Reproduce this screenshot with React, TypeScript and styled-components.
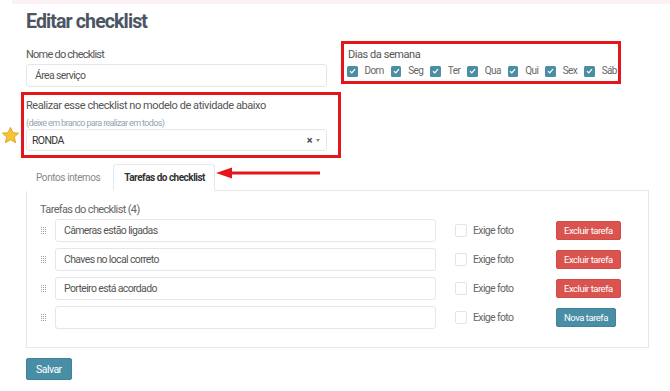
import * as React from 'react';
import styled, { createGlobalStyle } from 'styled-components';

const GlobalStyle = createGlobalStyle`
  html, body {
    margin: 0;
    padding: 0;
    background: #fff;
  }
  body {
    font-family: Roboto, "Liberation Sans", Arial, sans-serif;
    color: #555;
    letter-spacing: -0.04em;
  }
  * {
    box-sizing: border-box;
  }
`;

const teal = '#4a8ea5';
const danger = '#d9534f';
const annotation = '#e3161c';

const TopBand = styled.div`
  height: 4px;
  margin-left: 12px;
  background: #fcf1f4;
`;

const Page = styled.div`
  padding: 0 21px 0 26px;
`;

const Title = styled.h1`
  margin: 5px 0 0;
  font-size: 19.5px;
  line-height: 26px;
  font-weight: 700;
  color: #4b5563;
  letter-spacing: -0.045em;
`;

const TopSection = styled.div`
  display: flex;
  align-items: flex-start;
  margin-top: 10px;
`;

const LeftColumn = styled.div`
  width: 301px;
  display: flex;
  flex-direction: column;
`;

const Label = styled.div<{ $offset?: number; $tight?: boolean }>`
  font-size: 11px;
  line-height: 14px;
  color: #555;
  margin-top: ${p => p.$offset || 0}px;
  letter-spacing: ${p => (p.$tight ? '-0.07em' : '-0.04em')};
`;

const Hint = styled.div`
  font-size: 9px;
  line-height: 12px;
  color: #93a4b4;
  margin-top: 4px;
`;

const TextInput = styled.div<{ $offset?: number }>`
  height: 23px;
  margin-top: ${p => p.$offset || 0}px;
  border: 1px solid #e3e6ea;
  border-radius: 3px;
  display: flex;
  align-items: center;
  padding: 0 8px;
  font-size: 10.5px;
  color: #555;
  background: #fff;
`;

const AnnotatedBox = styled.div`
  position: relative;
  border: 3px solid ${annotation};
  margin: 5px -14px 0 -5px;
  padding: 4px 11px 4px 2px;
`;

const Star = styled.svg`
  position: absolute;
  left: -23px;
  top: 31px;
`;

const SelectBox = styled(TextInput)`
  height: 22px;
  justify-content: space-between;
  padding: 0 6px 0 5px;
  color: #333;
`;

const SelectIcons = styled.div`
  display: flex;
  align-items: center;
  gap: 4px;
  color: #444;
  font-size: 11px;
  font-weight: 700;
`;

const Caret = styled.span`
  width: 0;
  height: 0;
  border-left: 2.5px solid transparent;
  border-right: 2.5px solid transparent;
  border-top: 3px solid #888;
`;

const DaysBox = styled.div`
  margin-left: 14px;
  margin-top: -4px;
  width: 280px;
  border: 3px solid ${annotation};
  padding: 4px 3px 4px 4px;
`;

const DaysRow = styled.div`
  display: flex;
  align-items: center;
  gap: 7px;
  margin-top: 3px;
  margin-left: -1px;
`;

const Day = styled.label`
  display: flex;
  align-items: center;
  gap: 7px;
  font-size: 10px;
  line-height: 12px;
  letter-spacing: -0.06em;
  color: #666;
`;

const CheckedBox = styled.span`
  width: 10.5px;
  height: 11px;
  border-radius: 1.5px;
  background: ${teal};
  display: inline-flex;
  align-items: center;
  justify-content: center;
`;

const TabsRow = styled.div`
  display: flex;
  align-items: flex-end;
  margin-top: 6px;
`;

const Tab = styled.div<{ $active?: boolean }>`
  height: 27px;
  display: flex;
  align-items: center;
  padding: ${p => (p.$active ? '0 9px 0 10px' : '0 12px 0 9px')};
  font-size: 10px;
  margin-bottom: -1px;
  position: relative;
  z-index: 1;
  background: #fff;
  font-weight: ${p => (p.$active ? 700 : 400)};
  letter-spacing: ${p => (p.$active ? '-0.05em' : '-0.04em')};
  color: ${p => (p.$active ? '#333' : '#888')};
  border: 1px solid ${p => (p.$active ? '#e5e7ea' : 'transparent')};
  border-bottom-color: ${p => (p.$active ? '#fff' : 'transparent')};
  border-radius: 3px 3px 0 0;
`;

const Arrow = styled.svg`
  margin: 0 0 11px 1px;
`;

const Panel = styled.div`
  width: 623px;
  border: 1px solid #e5e7ea;
  padding: 12px 13px 18px 13px;
`;

const PanelTitle = styled.div`
  font-size: 11px;
  line-height: 14px;
  color: #666;
  margin-bottom: 2px;
`;

const TaskRow = styled.div`
  display: grid;
  grid-template-columns: 15px 381px 120px auto;
  align-items: center;
  height: 23px;
  margin-bottom: 6px;

  &:last-child {
    margin-bottom: 0;
  }
`;

const Handle = styled.svg`
  margin-left: 1px;
`;

const PhotoOption = styled.label`
  display: flex;
  align-items: center;
  gap: 6px;
  padding-left: 19px;
  font-size: 10.5px;
  color: #666;
`;

const EmptyBox = styled.span`
  width: 12px;
  height: 13px;
  border: 1px solid #e1e4e8;
  border-radius: 2px;
  background: #fff;
`;

const Button = styled.button<{ $variant: 'danger' | 'primary' }>`
  font-family: Roboto, "Liberation Sans", Arial, sans-serif;
  letter-spacing: -0.05em;
  border: 1px solid ${p => (p.$variant === 'danger' ? '#d24b47' : '#3f8299')};
  background: ${p => (p.$variant === 'danger' ? danger : teal)};
  color: #fff;
  font-size: 9.5px;
  height: 19px;
  padding: 0 7px;
  border-radius: 2px;
  cursor: pointer;
  justify-self: start;
`;

const SaveButton = styled(Button)`
  margin-top: 10px;
  height: 22px;
  padding: 0 9px;
  font-size: 10.5px;
`;

const CheckMark = () => (
  <svg width="7" height="6" viewBox="0 0 7 6">
    <path d="M1 3.2 L2.8 4.8 L6 1.2" fill="none" stroke="#fff" strokeWidth="1.2" />
  </svg>
);

const DragHandle = () => (
  <Handle width="6" height="8" viewBox="0 0 6 8">
    {[0, 2, 4, 6].map(y =>
      [0, 2, 4].map(x => <rect key={`${x}-${y}`} x={x} y={y} width="1" height="1" fill="#9aa3ad" />)
    )}
  </Handle>
);

const days = ['Dom', 'Seg', 'Ter', 'Qua', 'Qui', 'Sex', 'Sáb'];

const tasks = ['Câmeras estão ligadas', 'Chaves no local correto', 'Porteiro está acordado', ''];

const App = () => {
  return (
    <>
      <GlobalStyle />
      <TopBand />
      <Page>
        <Title>Editar checklist</Title>
        <TopSection>
          <LeftColumn>
            <Label $offset={3} $tight>Nome do checklist</Label>
            <TextInput $offset={2}>Área serviço</TextInput>
            <AnnotatedBox>
              <Star width="19" height="19" viewBox="0 0 24 24">
                <path
                  d="M12 1.8 L15 8.4 L22.2 9.1 L16.8 13.9 L18.4 21 L12 17.3 L5.6 21 L7.2 13.9 L1.8 9.1 L9 8.4 Z"
                  fill="#f6c536"
                  stroke="#e2a21a"
                  strokeWidth="1.2"
                  strokeLinejoin="round"
                />
              </Star>
              <Label>Realizar esse checklist no modelo de atividade abaixo</Label>
              <Hint>(deixe em branco para realizar em todos)</Hint>
              <SelectBox>
                <span>RONDA</span>
                <SelectIcons>
                  <span>×</span>
                  <Caret />
                </SelectIcons>
              </SelectBox>
            </AnnotatedBox>
          </LeftColumn>
          <DaysBox>
            <Label>Dias da semana</Label>
            <DaysRow>
              {days.map(d => (
                <Day key={d}>
                  <CheckedBox>
                    <CheckMark />
                  </CheckedBox>
                  {d}
                </Day>
              ))}
            </DaysRow>
          </DaysBox>
        </TopSection>

        <TabsRow>
          <Tab>Pontos internos</Tab>
          <Tab $active>Tarefas do checklist</Tab>
          <Arrow width="106" height="12" viewBox="0 0 106 12">
            <path d="M104 6 L14 6" stroke={annotation} strokeWidth="3" />
            <path d="M0 6 L16 0.5 L16 11.5 Z" fill={annotation} />
          </Arrow>
        </TabsRow>
        <Panel>
          <PanelTitle>Tarefas do checklist (4)</PanelTitle>
          {tasks.map((t, i) => (
            <TaskRow key={i}>
              <DragHandle />
              <TextInput>{t}</TextInput>
              <PhotoOption>
                <EmptyBox />
                Exige foto
              </PhotoOption>
              {t ? (
                <Button $variant="danger">Excluir tarefa</Button>
              ) : (
                <Button $variant="primary">Nova tarefa</Button>
              )}
            </TaskRow>
          ))}
        </Panel>
        <SaveButton $variant="primary">Salvar</SaveButton>
      </Page>
    </>
  );
};

export default App;
